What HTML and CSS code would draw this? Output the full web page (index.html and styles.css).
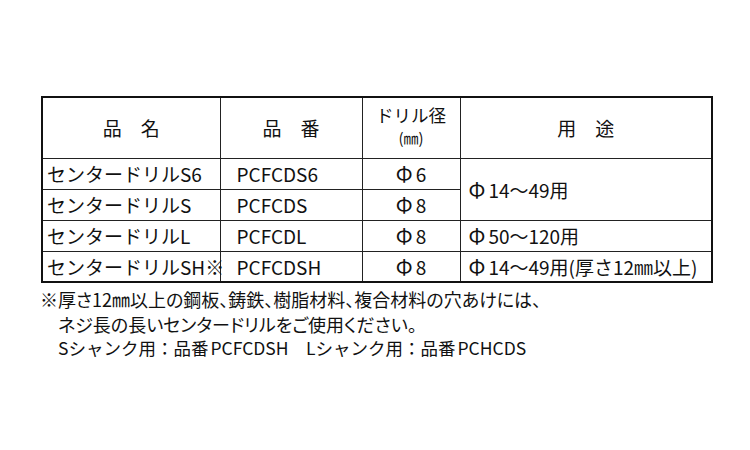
FILE: index.html
```html
<!DOCTYPE html>
<html lang="ja">
<head>
<meta charset="utf-8">
<link rel="stylesheet" href="styles.css">
</head>
<body>
<div class="page">
  <table class="spec">
    <colgroup>
      <col class="c1"><col class="c2"><col class="c3"><col class="c4">
    </colgroup>
    <tr class="head">
      <th>品　名</th>
      <th>品　番</th>
      <th class="dia"><span class="l1">ドリル径</span><span class="l2">(㎜)</span></th>
      <th>用　途</th>
    </tr>
    <tr>
      <td class="name">センタードリルS6</td>
      <td class="code">PCFCDS6</td>
      <td class="size"><span class="phi">Φ</span>6</td>
      <td class="use" rowspan="2"><span class="phi">Φ</span>14～49用</td>
    </tr>
    <tr>
      <td class="name">センタードリルS</td>
      <td class="code">PCFCDS</td>
      <td class="size"><span class="phi">Φ</span>8</td>
    </tr>
    <tr>
      <td class="name">センタードリルL</td>
      <td class="code">PCFCDL</td>
      <td class="size"><span class="phi">Φ</span>8</td>
      <td class="use"><span class="phi">Φ</span>50～120用</td>
    </tr>
    <tr>
      <td class="name">センタードリルSH※</td>
      <td class="code">PCFCDSH</td>
      <td class="size"><span class="phi">Φ</span>8</td>
      <td class="use"><span class="phi">Φ</span>14～49用(厚さ12㎜以上)</td>
    </tr>
  </table>
  <div class="notes">
    <p>※厚さ12㎜以上の鋼板、鋳鉄、樹脂材料、複合材料の穴あけには、</p>
    <p class="ind">ネジ長の長いセンタードリルをご使用ください。</p>
    <p class="ind plain">Sシャンク用：品番<span class="gap">PCFCDSH</span>　Lシャンク用：品番<span class="gap">PCHCDS</span></p>
  </div>
</div>
</body>
</html>
```
FILE: styles.css
```css
html, body {
  margin: 0;
  padding: 0;
  background: #fff;
}
body {
  font-family: "Noto Sans CJK JP", "Noto Sans", sans-serif;
  color: #111;
}
.page {
  padding: 96px 0 0 41px;
}
.spec {
  border-collapse: collapse;
  border: 2px solid #111;
  width: 670px;
  table-layout: fixed;
}
.c1 { width: 178px; }
.c2 { width: 142px; }
.c3 { width: 98px; }
.c4 { width: 252px; }
.spec th, .spec td {
  border: 1px solid #222;
  padding: 0;
  font-weight: normal;
  font-size: 19px;
  line-height: 1;
  white-space: nowrap;
}
.head {
  height: 61px;
}
.head th {
  text-align: center;
}
.dia {
  padding-bottom: 3px !important;
}
.dia .l1, .dia .l2 {
  display: block;
}
.dia .l1 { font-size: 17.5px; line-height: 20px; }
.dia .l2 { font-size: 15px; line-height: 18px; margin-top: 4px; }
.spec tr:not(.head) {
  height: 31px;
}
.name { padding-left: 4px !important; }
.code { padding-left: 16px !important; }
.size { text-align: center; }
.use { padding-left: 8px !important; }
.phi {
  font-size: 21px;
  margin-right: 3px;
}
.notes {
  margin-top: 4px;
  margin-left: -1px;
  font-size: 18px;
  line-height: 24.5px;
  font-feature-settings: "palt";
}
.notes p {
  margin: 0;
  white-space: nowrap;
}
.notes .ind {
  padding-left: 18px;
}
.notes .plain {
  font-feature-settings: normal;
  font-size: 17.5px;
}
.gap {
  margin-left: 2px;
}
```
